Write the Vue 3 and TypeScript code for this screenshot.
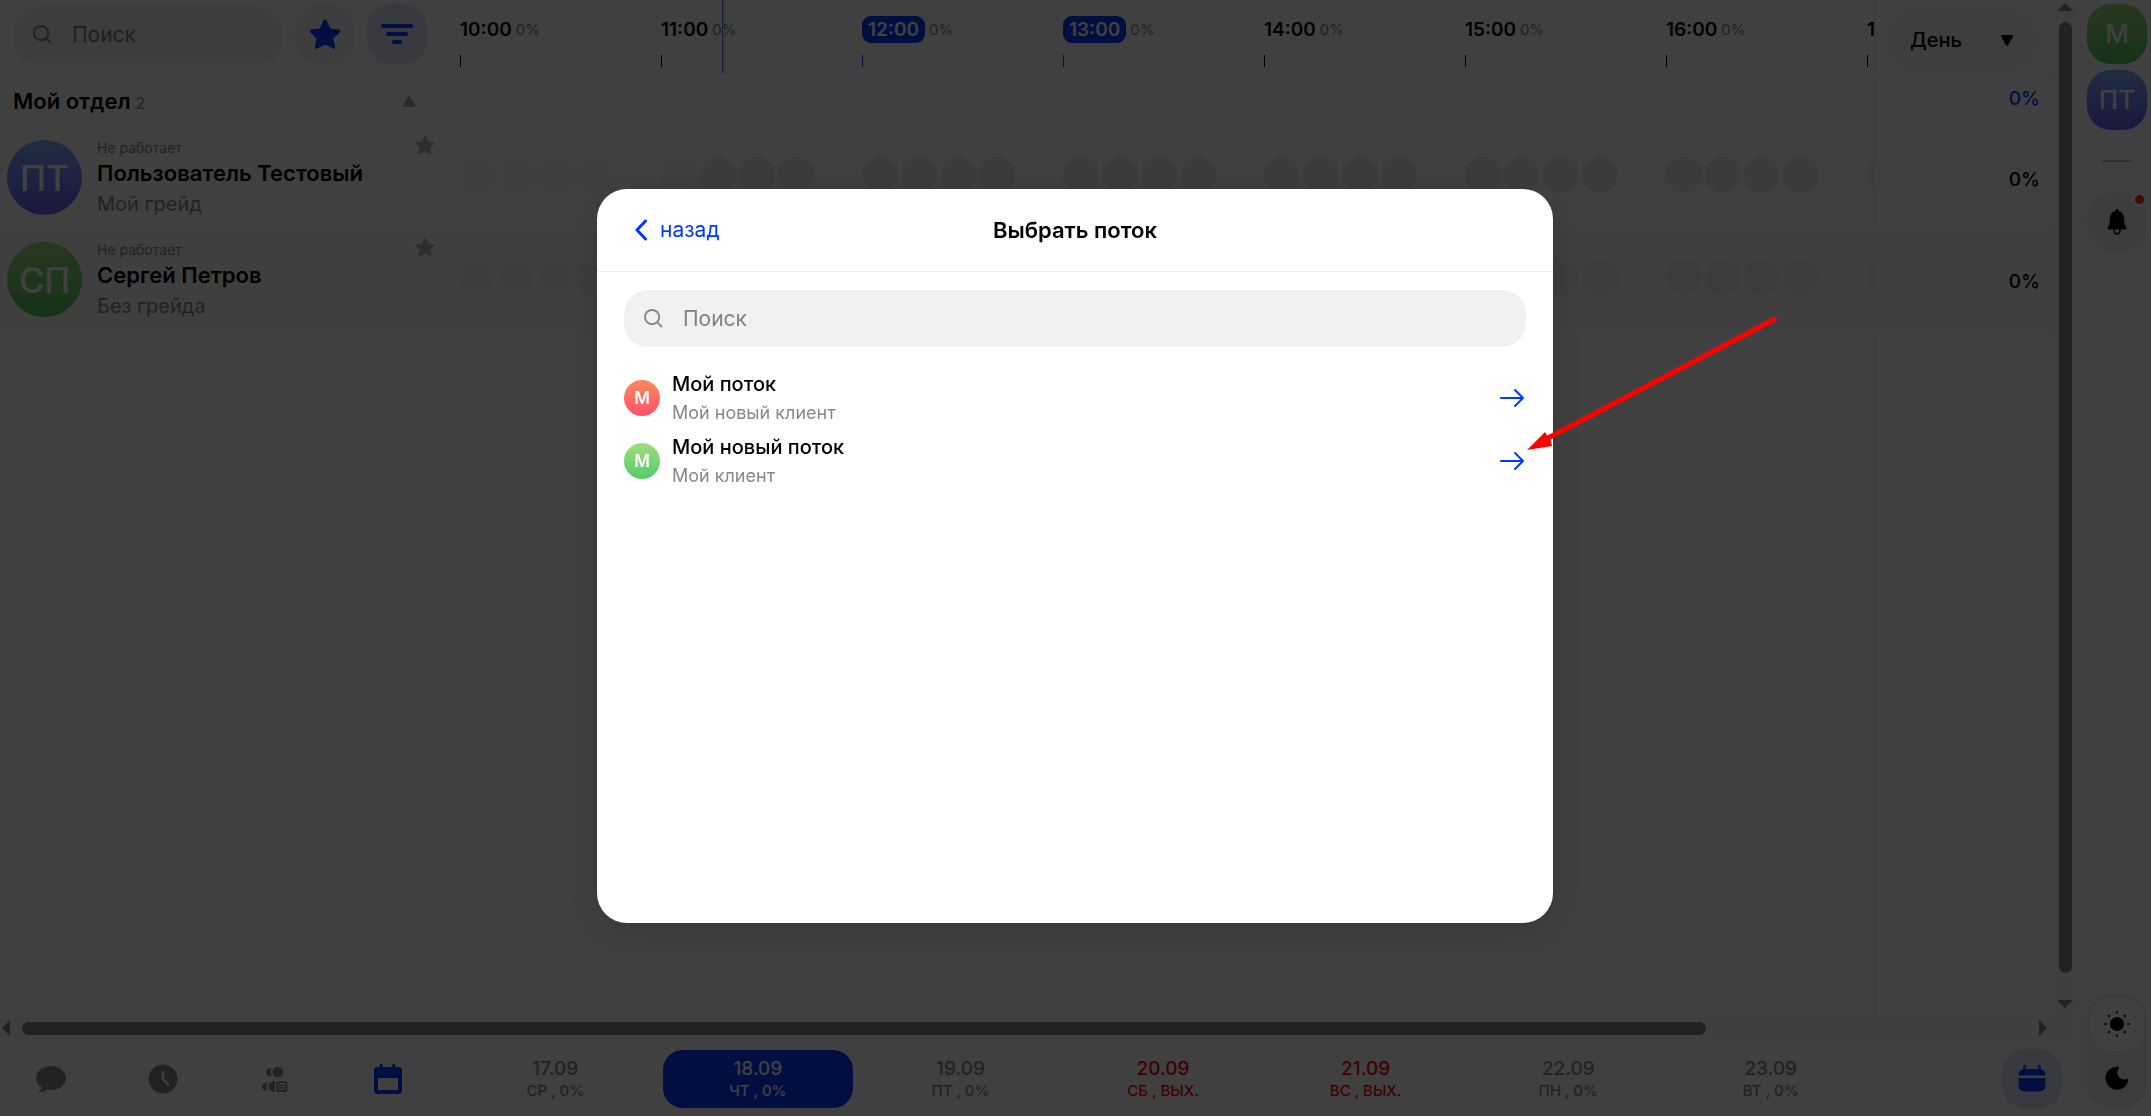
<script setup lang="ts">
interface Person {
  name: string
  initials: string
  grade: string
  tone: string
  load: string
}
interface Hour {
  label: string
  active: boolean
  past: number
}
interface Day {
  date: string
  note: string
  state: string
}
interface Stream {
  name: string
  client: string
  tone: string
}

const people: Person[] = [
  { name: 'Пользователь Тестовый', initials: 'ПТ', grade: 'Мой грейд', tone: 'violet', load: '0%' },
  { name: 'Сергей Петров', initials: 'СП', grade: 'Без грейда', tone: 'green', load: '0%' },
]
const hours: Hour[] = [
  { label: '10:00', active: false, past: 4 },
  { label: '11:00', active: false, past: 1 },
  { label: '12:00', active: true, past: 0 },
  { label: '13:00', active: true, past: 0 },
  { label: '14:00', active: false, past: 0 },
  { label: '15:00', active: false, past: 0 },
  { label: '16:00', active: false, past: 0 },
  { label: '17:00', active: false, past: 0 },
]
const days: Day[] = [
  { date: '17.09', note: 'СР , 0%', state: '' },
  { date: '18.09', note: 'ЧТ , 0%', state: 'current' },
  { date: '19.09', note: 'ПТ , 0%', state: '' },
  { date: '20.09', note: 'СБ , ВЫХ.', state: 'off' },
  { date: '21.09', note: 'ВС , ВЫХ.', state: 'off' },
  { date: '22.09', note: 'ПН , 0%', state: '' },
  { date: '23.09', note: 'ВТ , 0%', state: '' },
]
const streams: Stream[] = [
  { name: 'Мой поток', client: 'Мой новый клиент', tone: 'red' },
  { name: 'Мой новый поток', client: 'Мой клиент', tone: 'green' },
]
const starPath =
  'M16 1.5c.7 0 1.3.5 1.6 1.100l3.600 8 8.600 1c1.500.2 2 1.900.9 2.900l-6.300 5.900 1.700 8.500c.3 1.500-1.200 2.400-2.400 1.700L16 26.500l-7.700 4.100c-1.200.7-2.700-.2-2.400-1.700l1.700-8.500-6.300-5.900c-1.100-1-.6-2.700.9-2.900l8.600-1 3.600-8c.3-.6.9-1.100 1.600-1.100z'
</script>

<template>
  <div class="app">
    <main class="main">
      <div class="board">
        <div class="grid">
          <header class="row head">
            <div class="left tools">
              <label class="search">
                <svg class="lens" viewBox="0 0 20 20"><circle cx="8.500" cy="8.500" r="7.500" /><path d="M14 14l5 5" /></svg>
                <input type="text" placeholder="Поиск" aria-label="Поиск сотрудника" />
              </label>
              <button class="square" aria-label="Избранное">
                <svg width="32" height="32" viewBox="0 0 32 32" fill="#0038ff"><path :d="starPath" /></svg>
              </button>
              <button class="square tinted" aria-label="Фильтр">
                <svg class="filter" width="32" height="22" viewBox="0 0 32 22"><path d="M2 3h28M7 11h18M13 19h6" /></svg>
              </button>
            </div>
            <div class="mid hours">
              <div v-for="h in hours" :key="h.label" class="hour" :class="{ active: h.active }">
                <div class="stamp"><b>{{ h.label }}</b><span>0%</span></div>
                <i class="tick"></i>
              </div>
              <i class="now"></i>
            </div>
            <div class="right period">
              <select aria-label="Период">
                <option>День</option>
              </select>
              <svg class="caret" width="12" height="11" viewBox="0 0 12 11"><path d="M1 0h10q1.500.5.7 2L7.200 10q-1.200 1.500-2.400 0L.3 2Q-.5.500 1 0z" /></svg>
            </div>
          </header>

          <div class="row group">
            <div class="left caption">
              <h2>Мой отдел</h2><span>2</span>
              <svg width="12" height="11" viewBox="0 0 12 11" fill="#aaa"><path d="M1 11h10q1.500-.5.7-2L7.200 1Q6-.5 4.800 1L.3 9Q-.5 10.500 1 11z" /></svg>
            </div>
            <div class="mid"></div>
            <div class="right load blue">0%</div>
          </div>

          <div v-for="(p, i) in people" :key="p.name" class="row person" :class="{ alt: i === 1 }">
            <div class="left card">
              <div class="avatar big" :class="p.tone">{{ p.initials }}</div>
              <div class="who">
                <small>Не работает</small>
                <strong>{{ p.name }}</strong>
                <span>{{ p.grade }}</span>
              </div>
              <svg class="fav" width="20" height="20" viewBox="0 0 32 32" fill="#b8b8b8"><path :d="starPath" /></svg>
            </div>
            <div class="mid slots">
              <div v-for="h in hours" :key="h.label" class="quarter">
                <i v-for="n in 4" :key="n" :class="{ past: n <= h.past }"></i>
              </div>
            </div>
            <div class="right load">{{ p.load }}</div>
          </div>

          <div class="row rest">
            <div class="left"></div>
            <div class="mid"></div>
            <div class="right"></div>
          </div>
        </div>
        <div class="vbar">
          <svg width="16" height="8" viewBox="0 0 16 8"><path d="M8 0l8 8H0z" /></svg>
          <div class="track"><i></i></div>
          <svg width="16" height="8" viewBox="0 0 16 8"><path d="M8 8l8-8H0z" /></svg>
        </div>
      </div>

      <div class="hbar">
        <svg width="8" height="16" viewBox="0 0 8 16"><path d="M0 8l8-8v16z" /></svg>
        <div class="track"><i></i></div>
        <svg width="8" height="16" viewBox="0 0 8 16"><path d="M8 8L0 0v16z" /></svg>
      </div>

      <footer class="bottom">
        <nav class="tabs">
          <button aria-label="Чат">
            <svg width="30" height="30" viewBox="0 0 30 30" fill="#888"><path d="M15 2C6.800 2 0 7.300 0 14c0 3.900 2 7 5.400 9.300.2 1.800-.9 3.500-2.700 4.200-.4.300-.2.900.3.900 3.300.1 5.600-1.100 7.600-2.800 1.400.3 2.900.5 4.400.5 8.200 0 15-5.300 15-12S23.200 2 15 2z" /></svg>
          </button>
          <button aria-label="Время">
            <svg width="30" height="30" viewBox="0 0 30 30"><circle cx="15" cy="15" r="14.500" fill="#888" /><path d="M15 8.500V15l5 5.500" fill="none" stroke="#fff" stroke-width="2.500" stroke-linecap="round" stroke-linejoin="round" /></svg>
          </button>
          <button aria-label="Команда">
            <svg width="30" height="30" viewBox="0 0 30 30" fill="#888"><path d="M10.800 4.500a4 4 0 1 0 0 7.200 6.500 6.500 0 0 1 0-7.200z" /><circle cx="16.800" cy="8" r="5.300" /><path d="M6.500 18.200C2.500 19.200.8 21 .8 22.700s1.700 3.500 5.700 4.500c-1.400-2.800-1.400-6.200 0-9zM13.800 17c-4.500.5-6.500 3-6.500 5.600s2 5.200 6.500 5.600z" /><path fill-rule="evenodd" d="M18 17.200h5.600q2.800 0 2.800 2.800v5.200q0 2.800-2.800 2.800H18q-2.800 0-2.800-2.800V20q0-2.800 2.800-2.800zm.6 1.900q-1.400 0-1.400 1.400v4.200q0 1.400 1.400 1.400H23q1.400 0 1.400-1.400v-4.200q0-1.400-1.400-1.400z" /><path d="M17.800 20.500h6v1.400h-6zM17.800 23.300h6v1.400h-6z" /></svg>
          </button>
          <button aria-label="Календарь">
            <svg width="30" height="30" viewBox="0 0 30 30" fill="#0038ff"><path fill-rule="evenodd" d="M7.500 0h1.500q.8 0 .8 1v2h9.400V1q0-1 .8-1h1.500q.8 0 .8 1v2H26q3 0 3 3v21q0 3-3 3H4q-3 0-3-3V6q0-3 3-3h2.700V1q0-1 .8-1zM5 14v12h20V14z" /></svg>
          </button>
        </nav>
        <div class="days">
          <button v-for="d in days" :key="d.date" class="day" :class="d.state">
            <b>{{ d.date }}</b><span>{{ d.note }}</span>
          </button>
        </div>
        <div class="today">
          <button class="square tinted" aria-label="Сегодня">
            <svg width="28" height="28" viewBox="0 0 28 28" fill="#0038ff"><path d="M5.200 1q0-1 1.200-1t1.200 1v3h12.800V1q0-1 1.200-1t1.200 1v3.200q4.700.8 4.700 6.300H.5q0-5.500 4.700-6.300zM.5 13h27v7q0 6.500-6.500 6.500H7q-6.500 0-6.500-6.500z" /></svg>
          </button>
        </div>
      </footer>
    </main>

    <aside class="side">
      <button class="avatar tile green">М</button>
      <button class="avatar tile violet">ПТ</button>
      <hr />
      <button class="square bell" aria-label="Уведомления">
        <svg width="20" height="26" viewBox="0 0 20 26"><path d="M10 0c.9 0 1.500.6 1.500 1.500v.4c3.300.7 5.200 3.300 5.500 6.600l.5 6c.1 1.500.6 2.300 1.500 3.200 1.300 1.300.7 2.800-1.200 2.800H2.200C.3 20.500-.3 19 1 17.700c.9-.9 1.400-1.700 1.500-3.200l.5-6c.3-3.300 2.200-5.900 5.500-6.600v-.4C8.500.600 9.100 0 10 0z" /><path d="M7 20.500v1.500q.5 3 3 3t3-3v-1.500" fill="none" stroke="#000" stroke-width="1.500" /></svg>
        <i class="dot"></i>
      </button>
      <div class="theme">
        <button class="on" aria-label="Светлая тема">
          <svg width="26" height="26" viewBox="0 0 26 26"><circle cx="13" cy="13" r="7" /><path d="M13 .5v2M13 23.500v2M.5 13h2M23.500 13h2M4.300 4.300l1.500 1.500M20.200 20.200l1.500 1.500M4.300 21.700l1.500-1.500M20.200 5.800l1.500-1.500" stroke="#000" stroke-width="2" /></svg>
        </button>
        <button aria-label="Тёмная тема">
          <svg width="24" height="24" viewBox="0 0 24 24"><path d="M12.500.7C13.800.4 14.600 1.300 13.900 2.200 10 7.500 13.500 14.800 21.500 13.200c1.200-.4 2.200.1 1.800 1.400A11.500 11.500 0 1 1 12.500.7z" /></svg>
        </button>
      </div>
    </aside>

    <div class="overlay">
      <section class="modal" role="dialog" aria-labelledby="modal-title">
        <header>
          <button class="back">
            <svg width="12" height="22" viewBox="0 0 12 22"><path d="M10.500 2L2 11l8.500 9" /></svg>назад
          </button>
          <h1 id="modal-title">Выбрать поток</h1>
        </header>
        <div class="body">
          <label class="search">
            <svg class="lens" viewBox="0 0 20 20"><circle cx="8.500" cy="8.500" r="7.500" /><path d="M14 14l5 5" /></svg>
            <input type="text" placeholder="Поиск" aria-label="Поиск потока" />
          </label>
          <ul>
            <li v-for="s in streams" :key="s.name">
              <div class="avatar small" :class="s.tone">М</div>
              <div class="stream">
                <strong>{{ s.name }}</strong>
                <span>{{ s.client }}</span>
              </div>
              <button class="go" :aria-label="s.name">
                <svg width="26" height="20" viewBox="0 0 26 20"><path d="M2 10h22M16 2l8 8-8 8" /></svg>
              </button>
            </li>
          </ul>
        </div>
        <svg class="pointer" width="254" height="138" viewBox="0 0 254 138"><path d="M22 123.500L247 5.500" stroke="#f00" stroke-width="5" stroke-linecap="round" /><path d="M0 136l18-18 3 5 3 4 1 5z" fill="#f00" /></svg>
      </section>
    </div>
  </div>
</template>

<style>
body {
  margin: 0;
}
</style>

<style scoped>
* {
  box-sizing: border-box;
}
.app {
  display: flex;
  height: 100vh;
  overflow: hidden;
  background: #fff;
  color: #000;
  font-family: Inter, 'Noto Sans', sans-serif;
  font-size: 20px;
  line-height: 24px;
}
button,
input,
select {
  border: 0;
  padding: 0;
  margin: 0;
  background: none;
  font: inherit;
  color: inherit;
}
svg {
  display: block;
  flex: none;
}
h1,
h2,
ul {
  margin: 0;
  padding: 0;
  list-style: none;
}
.main {
  flex: 1;
  min-width: 0;
  display: flex;
  flex-direction: column;
}
.board {
  flex: 1;
  min-height: 0;
  display: flex;
}
.grid {
  flex: 1;
  min-width: 0;
  display: flex;
  flex-direction: column;
}
.row {
  display: flex;
}
.left {
  flex: none;
  width: 445px;
}
.mid {
  flex: 1;
  min-width: 0;
  overflow: hidden;
  padding-left: 15px;
}
.right {
  flex: none;
  width: 179px;
  border-left: 2px solid #f4f4f4;
}
.head {
  height: 74px;
  border-bottom: 1px solid #f3f3f3;
}
.tools {
  display: flex;
  gap: 12px;
  padding: 4px 0 0 13px;
  border-right: 1px solid #f3f3f3;
}
.search {
  display: flex;
  align-items: center;
  height: 57px;
  border-radius: 24px;
  background: #f1f1f1;
  padding: 0 20px;
  gap: 20px;
}
.tools .search {
  width: 270px;
  margin-top: 2px;
}
.search input {
  flex: 1;
  min-width: 0;
  outline: 0;
  font-size: 21px;
}
.search input::placeholder {
  color: #808080;
  opacity: 1;
}
.lens {
  width: 19px;
  height: 19px;
  fill: none;
  stroke: #888;
  stroke-width: 2;
}
.square {
  flex: none;
  display: flex;
  align-items: center;
  justify-content: center;
  width: 60px;
  height: 60px;
  border-radius: 24px;
  background: #f4f4f4;
}
.tinted {
  background: #e0e5ff;
}
.filter {
  fill: none;
  stroke: #0038ff;
  stroke-width: 4;
  stroke-linecap: round;
}
.hours {
  position: relative;
  display: flex;
}
.hour {
  flex: none;
  width: 201px;
  padding-top: 16px;
}
.stamp {
  display: flex;
  align-items: center;
  gap: 4px;
  height: 27px;
}
.stamp b {
  font-size: 19px;
  font-weight: 600;
}
.stamp span {
  font-size: 15px;
  color: #888;
}
.active .stamp b {
  background: #0038ff;
  color: #fff;
  border-radius: 9px;
  padding: 0 6px;
  line-height: 27px;
}
.tick {
  display: block;
  width: 1px;
  height: 12px;
  margin-top: 12px;
  background: #000;
}
.active .tick {
  background: #0038ff;
}
.now {
  position: absolute;
  left: 277px;
  top: 0;
  width: 4px;
  height: 73px;
  background: rgba(0, 56, 255, 0.1);
  border-left: 1px solid #4d74ff;
}
.period {
  display: grid;
  align-items: center;
  padding: 10px 0 3px 11px;
}
.period select {
  grid-area: 1 / 1;
  width: 150px;
  height: 60px;
  padding-left: 23px;
  border-radius: 24px;
  background: #f8f8f8;
  appearance: none;
  font-weight: 500;
}
.caret {
  grid-area: 1 / 1;
  margin-left: 114px;
  pointer-events: none;
}
.group {
  height: 53px;
}
.caption {
  display: flex;
  align-items: baseline;
  gap: 5px;
  padding: 13px 30px 0 13px;
}
.caption h2 {
  font-size: 22px;
  line-height: 28px;
  font-weight: 600;
}
.caption span {
  font-size: 16px;
  color: #888;
}
.caption svg {
  margin-left: auto;
  align-self: flex-start;
  margin-top: 9px;
}
.load {
  display: flex;
  align-items: center;
  justify-content: flex-end;
  padding: 3px 13px 0 0;
  font-size: 19px;
  font-weight: 500;
}
.load.blue {
  padding: 0 13px 3px 0;
  color: #0038ff;
}
.person {
  height: 102px;
}
.person.alt {
  background: #fafafa;
}
.card {
  display: flex;
  padding: 13px 10px 0 7px;
}
.avatar {
  flex: none;
  display: flex;
  align-items: center;
  justify-content: center;
  color: #fff;
}
.big {
  width: 75px;
  height: 75px;
  border-radius: 50%;
  font-size: 35px;
  font-weight: 500;
}
.small {
  width: 36px;
  height: 36px;
  border-radius: 50%;
  font-size: 17px;
  font-weight: 600;
}
.tile {
  width: 60px;
  height: 60px;
  border-radius: 24px;
  font-size: 26px;
  font-weight: 500;
}
.green {
  background: linear-gradient(#a0de7e, #54cb68);
}
.violet {
  background: linear-gradient(#82b1ff, #665fff);
}
.red {
  background: linear-gradient(#ff885e, #ff516a);
}
.who {
  display: flex;
  flex-direction: column;
  flex: 1;
  padding-left: 15px;
}
.who small {
  font-size: 14px;
  line-height: 16px;
  color: #888;
}
.who strong {
  font-size: 22px;
  line-height: 34px;
  font-weight: 600;
}
.who span {
  line-height: 28px;
  color: #888;
}
.fav {
  margin-top: -5px;
}
.slots {
  display: flex;
  align-items: center;
}
.quarter {
  flex: none;
  display: flex;
  gap: 3px;
  width: 201px;
  padding-bottom: 6px;
}
.quarter i {
  width: 36px;
  height: 36px;
  border-radius: 50%;
  background: #ebebeb;
}
.quarter .past {
  background: #f7f7f7;
}
.alt .quarter i {
  background: #f0f0f0;
}
.alt .quarter .past {
  background: #f3f3f3;
}
.rest {
  flex: 1;
}
.vbar {
  display: flex;
  flex-direction: column;
  align-items: center;
  flex: none;
  width: 24px;
  padding: 3px 0 8px;
  background: #fbfbfb;
}
.vbar svg,
.hbar svg {
  fill: #888;
}
.track {
  flex: 1;
  display: flex;
}
.track i {
  background: #888;
  border-radius: 7px;
}
.vbar .track {
  flex-direction: column;
  padding: 11px 0 27px;
}
.vbar .track i {
  flex: 1;
  width: 13px;
}
.hbar {
  display: flex;
  align-items: center;
  flex: none;
  height: 24px;
  padding: 0 30px 0 2px;
  background: #fbfbfb;
}
.hbar .track {
  padding: 0 12px;
}
.hbar .track i {
  width: 84%;
  height: 13px;
}
.bottom {
  display: flex;
  flex: none;
  height: 76px;
  border-top: 1px solid #f3f3f3;
}
.tabs {
  display: flex;
  justify-content: space-between;
  align-items: center;
  flex: none;
  width: 445px;
  padding: 0 41px 0 36px;
  border-right: 1px solid #f3f3f3;
}
.days {
  flex: 1;
  display: flex;
  align-items: center;
  gap: 12px;
  padding: 0 0 0 15px;
}
.day {
  flex: 1;
  height: 58px;
  border-radius: 20px;
  display: flex;
  flex-direction: column;
  align-items: center;
  justify-content: center;
  color: #888;
}
.day b {
  font-size: 19px;
  font-weight: 500;
  line-height: 24px;
}
.day span {
  font-size: 15px;
  line-height: 20px;
  font-weight: 500;
}
.current {
  background: #0038ff;
  color: #fff;
}
.off {
  color: #ff0000;
}
.today {
  flex: none;
  width: 211px;
  padding: 8px 15px 0 0;
  display: flex;
  justify-content: flex-end;
}
.side {
  flex: none;
  width: 74px;
  padding: 4px 4px 8px 9px;
  border-left: 1px solid #f3f3f3;
  display: flex;
  flex-direction: column;
  gap: 6px;
}
.side hr {
  width: 30px;
  height: 2px;
  border: 0;
  margin: 24px auto;
  background: #ccc;
}
.bell {
  position: relative;
}
.dot {
  position: absolute;
  top: 0;
  right: 0;
  width: 15px;
  height: 15px;
  border: 3px solid #fff;
  border-radius: 50%;
  background: #f20;
}
.theme {
  margin-top: auto;
  display: flex;
  flex-direction: column;
  height: 114px;
  padding: 3px;
  border-radius: 24px;
  background: #ededed;
}
.theme button {
  flex: 1;
  display: flex;
  align-items: center;
  justify-content: center;
  border-radius: 21px;
}
.theme .on {
  background: #fff;
}
.overlay {
  position: fixed;
  inset: 0;
  display: flex;
  align-items: center;
  justify-content: center;
  padding: 0 1px 4px 0;
  background: rgba(0, 0, 0, 0.75);
}
.modal {
  position: relative;
  width: 956px;
  height: 734px;
  max-width: 100%;
  max-height: 100%;
  border-radius: 30px;
  background: #fff;
  box-shadow: 0 10px 40px rgba(0, 0, 0, 0.15);
}
.modal header {
  display: grid;
  grid-template-columns: 1fr auto 1fr;
  align-items: center;
  height: 83px;
  padding: 0 38px;
  border-bottom: 1px solid #ededed;
}
.back {
  display: flex;
  align-items: center;
  gap: 13px;
  color: #0038ff;
  justify-self: start;
  font-size: 21px;
}
.back svg {
  fill: none;
  stroke: #0038ff;
  stroke-width: 3;
  stroke-linecap: round;
  stroke-linejoin: round;
}
.modal h1 {
  font-size: 22px;
  line-height: 28px;
  font-weight: 600;
}
.body {
  padding: 18px 27px;
}
.modal ul {
  margin-top: 19px;
}
.modal li {
  display: flex;
  align-items: center;
  height: 63px;
}
.stream {
  flex: 1;
  display: flex;
  flex-direction: column;
  padding-left: 12px;
}
.stream strong {
  font-weight: 500;
  line-height: 30px;
}
.stream span {
  font-size: 18px;
  line-height: 28px;
  color: #888;
}
.go {
  margin-right: 1px;
}
.go svg {
  fill: none;
  stroke: #0038ff;
  stroke-width: 2;
  stroke-linecap: round;
  stroke-linejoin: round;
}
.pointer {
  position: absolute;
  left: 930px;
  top: 125px;
}
</style>
